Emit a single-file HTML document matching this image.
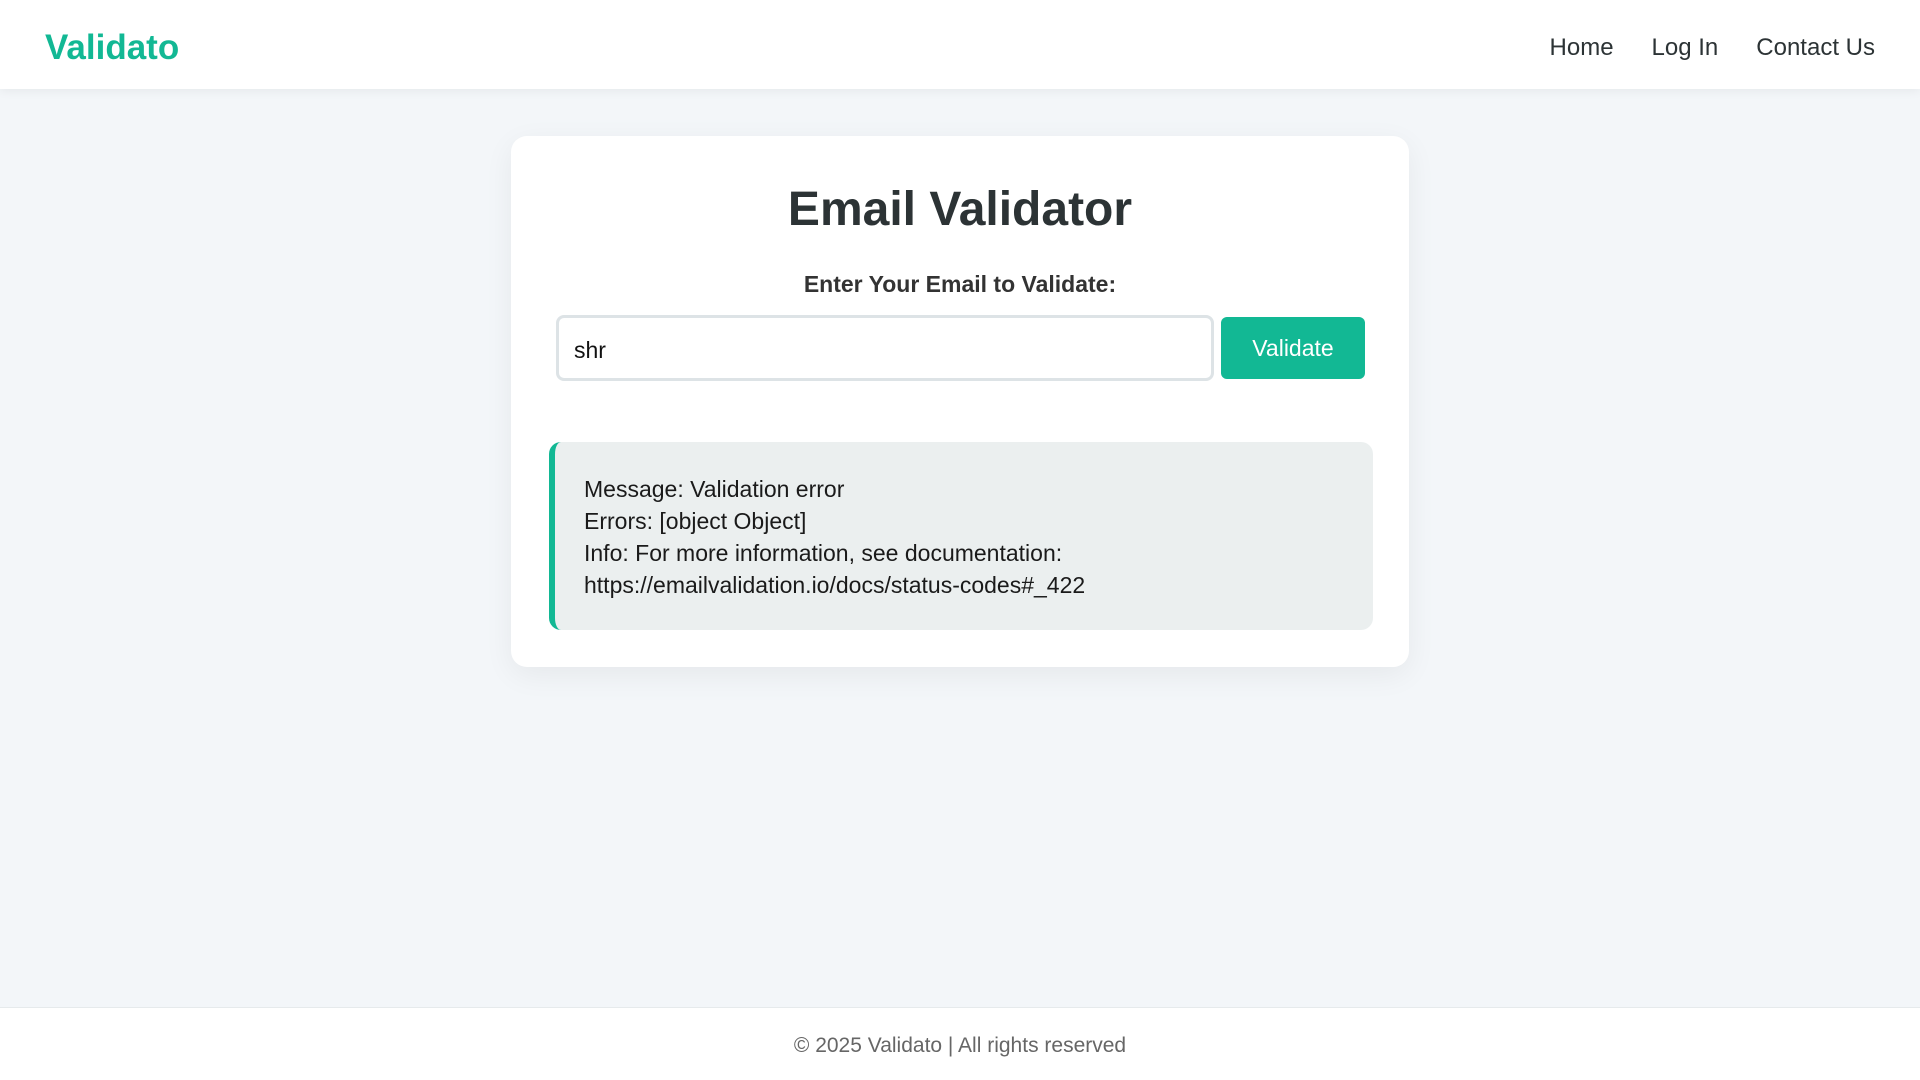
<!DOCTYPE html>
<html><head><meta charset="utf-8"><style>
*{box-sizing:border-box;margin:0;padding:0}
html,body{width:1920px;height:1080px;overflow:hidden}
body{background:#f3f6f9;font-family:"Liberation Sans",sans-serif;color:#2c3335;position:relative}
header{position:absolute;left:0;top:0;width:1920px;height:89px;background:#fff;box-shadow:0 2px 10px rgba(0,0,0,.06)}
.logo{position:absolute;left:45px;top:28px;font-size:35px;font-weight:bold;color:#12b894}
nav{position:absolute;right:45px;top:34px;font-size:24px;color:#2c3335}
nav span{margin-left:38px}
.card{position:absolute;left:511px;top:136px;width:898px;height:531px;background:#fff;border-radius:16px;box-shadow:0 8px 30px rgba(0,0,0,.06)}
h1{position:absolute;left:0;width:100%;top:182px;text-align:center;font-size:48px;font-weight:bold;color:#2c3335}
.lbl{position:absolute;left:0;width:100%;top:271px;text-align:center;font-size:23px;font-weight:bold;color:#333}
.inp{position:absolute;left:556px;top:315px;width:658px;height:66px;border:3px solid #dde3e6;border-radius:8px;background:#fff;font-size:23px;padding:19px 0 0 15px;color:#111}
.btn{position:absolute;left:1221px;top:317px;width:144px;height:62px;background:#12b894;border-radius:6px;color:#fff;font-size:23px;text-align:center;line-height:62px}
.res{position:absolute;left:549px;top:442px;width:824px;height:188px;background:#ebefef;border-left:6px solid #12b894;border-radius:12px;padding:31px 0 0 29px;font-size:23px;line-height:32px;color:#1a1a1a}
footer{position:absolute;left:0;top:1007px;width:1920px;height:73px;background:#fff;border-top:1px solid #e6eaec;text-align:center;font-size:21px;color:#666;padding-top:26px}
</style></head><body>
<header><div class="logo">Validato</div><nav><span>Home</span><span>Log In</span><span>Contact Us</span></nav></header>
<div class="card"></div>
<h1>Email Validator</h1>
<div class="lbl">Enter Your Email to Validate:</div>
<div class="inp">shr</div>
<div class="btn">Validate</div>
<div class="res">Message: Validation error<br>Errors: [object Object]<br>Info: For more information, see documentation:<br>https://emailvalidation.io/docs/status-codes#_422</div>
<footer>© 2025 Validato | All rights reserved</footer>
</body></html>
